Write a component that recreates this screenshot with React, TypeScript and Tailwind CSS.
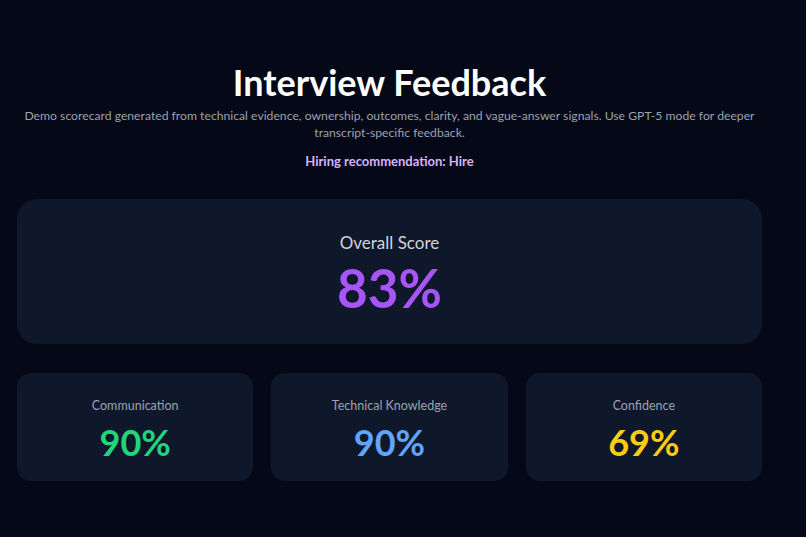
const scores = [
  { label: "Communication", value: 90, color: "text-[#22d47b]" },
  { label: "Technical Knowledge", value: 90, color: "text-[#60a5fa]" },
  { label: "Confidence", value: 69, color: "text-[#facc15]" },
];

export default function App() {
  return (
    <div className="min-h-[537px] bg-[#050816] font-['Lato','Noto_Sans',sans-serif]">
      <div className="w-[745px] ml-[17px] pt-[60px] pb-10">
        <header className="flex flex-col items-center text-center">
          <h1 className="text-[36px] leading-[44px] font-bold text-white">Interview Feedback</h1>
          <p className="mt-[3px] text-[12.2px] leading-[17px] text-[#9ca3af]">
            Demo scorecard generated from technical evidence, ownership, outcomes, clarity, and
            vague-answer signals. Use GPT-5 mode for deeper transcript-specific feedback.
          </p>
          <p className="mt-[12px] text-[13px] leading-[17px] font-bold text-[#d8b4fe]">
            Hiring recommendation: Hire
          </p>
        </header>

        <section className="mt-[29px] h-[145px] rounded-[20px] bg-[#0f172a] flex flex-col items-center justify-center pt-[6px]">
          <div className="text-[17px] leading-[22px] text-[#d1d5db]">Overall Score</div>
          <div className="mt-[4px] text-[53px] leading-[60px] font-bold text-[#a855f7]">83%</div>
        </section>

        <section className="mt-[29px] grid grid-cols-3 gap-[18px]">
          {scores.map((s) => (
            <div
              key={s.label}
              className="h-[108px] rounded-[14px] bg-[#0f172a] flex flex-col items-center justify-center pt-[6px]"
            >
              <div className="text-[12.5px] leading-[16px] text-[#9ca3af]">{s.label}</div>
              <div className={`mt-[7px] text-[36px] leading-[42px] font-bold ${s.color}`}>
                {s.value}%
              </div>
            </div>
          ))}
        </section>
      </div>
    </div>
  );
}
